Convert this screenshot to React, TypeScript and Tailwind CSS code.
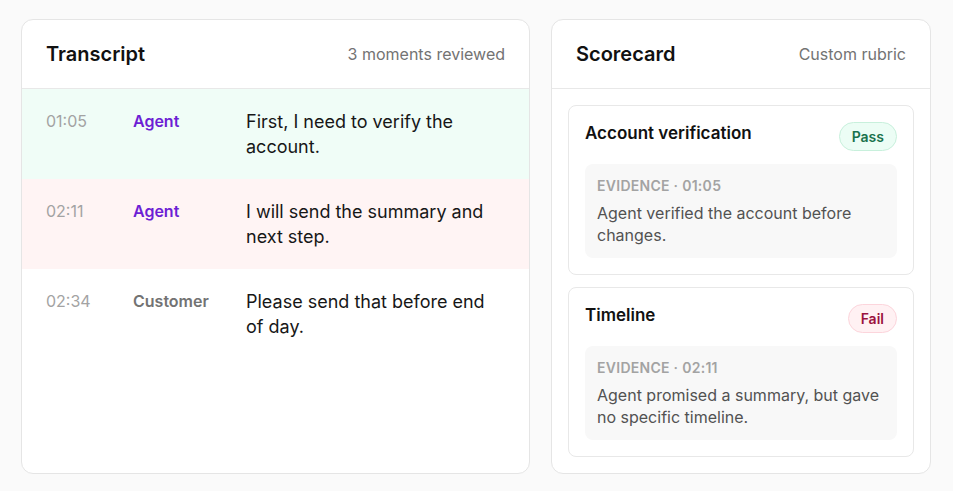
const rows = [
  { time: '01:05', who: 'Agent', text: 'First, I need to verify the account.', tone: 'pass' },
  { time: '02:11', who: 'Agent', text: 'I will send the summary and next step.', tone: 'fail' },
  { time: '02:34', who: 'Customer', text: 'Please send that before end of day.', tone: 'none' },
];

const checks = [
  { title: 'Account verification', result: 'Pass', at: '01:05', note: 'Agent verified the account before changes.' },
  { title: 'Timeline', result: 'Fail', at: '02:11', note: 'Agent promised a summary, but gave no specific timeline.' },
];

export default function App() {
  return (
    <div className="min-h-[491px] bg-[#fafafa] px-[21px] pt-[19px] font-['Inter',sans-serif] text-[#111]">
      <div className="flex gap-[21px]">
        {/* Transcript */}
        <section className="w-[509px] h-[455px] bg-white border border-[#e5e5e5] rounded-xl overflow-hidden">
          <div className="h-[69px] flex items-center justify-between px-6 border-b border-[#e8e8e8]">
            <h2 className="text-[20px] font-semibold">Transcript</h2>
            <span className="text-[16px] text-[#737373]">3 moments reviewed</span>
          </div>
          {rows.map(r => (
            <div
              key={r.time}
              className={
                r.tone === 'pass'
                  ? 'flex px-6 pt-5 pb-5 bg-[#f0fdf7]'
                  : r.tone === 'fail'
                    ? 'flex px-6 pt-5 pb-5 bg-[#fff4f4]'
                    : 'flex px-6 pt-5 pb-5'
              }
            >
              <span className="w-[87px] shrink-0 text-[16px] leading-[25px] text-[#a3a3a3]">{r.time}</span>
              <span
                className={
                  r.who === 'Agent'
                    ? 'w-[113px] shrink-0 text-[16px] leading-[25px] font-semibold text-[#6d1fd4]'
                    : 'w-[113px] shrink-0 text-[16px] leading-[25px] font-semibold text-[#737373]'
                }
              >
                {r.who}
              </span>
              <p className="flex-1 text-[18px] leading-[25px] text-[#171717]">{r.text}</p>
            </div>
          ))}
        </section>

        {/* Scorecard */}
        <section className="w-[380px] h-[455px] bg-white border border-[#e5e5e5] rounded-xl">
          <div className="h-[69px] flex items-center justify-between px-6 border-b border-[#e8e8e8]">
            <h2 className="text-[20px] font-semibold">Scorecard</h2>
            <span className="text-[16px] text-[#737373]">Custom rubric</span>
          </div>
          <div className="p-4 flex flex-col gap-[12px]">
            {checks.map(c => (
              <div key={c.title} className="border border-[#e8e8e8] rounded-lg px-4 pt-[15px] pb-4">
                <div className="flex justify-between">
                  <h3 className="text-[17px] font-semibold leading-6">{c.title}</h3>
                  <span
                    className={
                      c.result === 'Pass'
                        ? 'mt-[1px] h-[29px] px-3 flex items-center rounded-full border border-[#c8f0dc] bg-[#ecfdf5] text-[14px] font-semibold text-[#19724d]'
                        : 'mt-[1px] h-[29px] px-3 flex items-center rounded-full border border-[#fcd5dc] bg-[#fff1f3] text-[14px] font-semibold text-[#9b1240]'
                    }
                  >
                    {c.result}
                  </span>
                </div>
                <div className="mt-[13px] bg-[#f8f8f8] rounded-lg px-3 pt-[12px] pb-[12px]">
                  <div className="text-[14px] leading-5 font-semibold tracking-[0.02em] text-[#a3a3a3]">EVIDENCE · {c.at}</div>
                  <p className="mt-[6px] text-[16px] leading-[22px] text-[#525252]">{c.note}</p>
                </div>
              </div>
            ))}
          </div>
        </section>
      </div>
    </div>
  );
}
